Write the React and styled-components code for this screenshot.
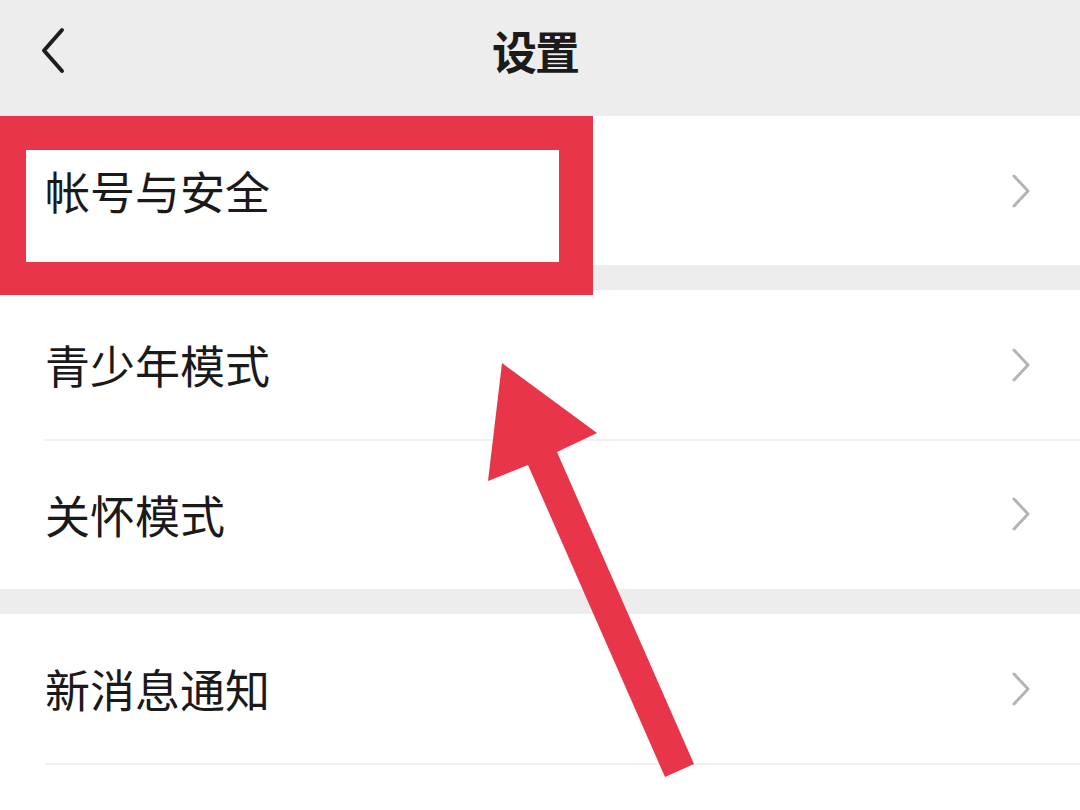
import React from "react";
import styled, { createGlobalStyle } from "styled-components";

const GlobalStyle = createGlobalStyle`
  html, body { margin: 0; padding: 0; background: #ededed; }
  body { font-family: "Noto Sans CJK SC", "Noto Sans", sans-serif; }
  * { box-sizing: border-box; }
`;

const Page = styled.div`
  position: relative;
  width: 1080px;
  height: 810px;
  overflow: hidden;
  background: #ededed;
  display: flex;
  flex-direction: column;
`;

const Header = styled.header`
  height: 116px;
  flex: none;
  display: grid;
  grid-template-columns: 120px 1fr 130px;
  align-items: start;
  padding-top: 24px;
`;

const BackButton = styled.div`
  padding-left: 40px;
  padding-top: 3px;
  display: flex;
`;

const Title = styled.h1`
  margin: 0;
  text-align: center;
  font-size: 45px;
  line-height: 54px;
  font-weight: 700;
  color: #1b1b1b;
  letter-spacing: -2px;
`;

const Groups = styled.div`
  display: flex;
  flex-direction: column;
  gap: 25px;
`;

const Group = styled.section`
  background: #ffffff;
  display: flex;
  flex-direction: column;
`;

const Row = styled.div`
  position: relative;
  height: ${(p) => (p.$first ? 149 : 150)}px;
  display: flex;
  align-items: center;
  justify-content: space-between;
  padding: 0 48px 0 45px;
  ${(p) =>
    p.$first
      ? ""
      : `
    &::before {
      content: "";
      position: absolute;
      left: 45px;
      right: 0;
      top: 0;
      height: 2px;
      background: #f0f0f0;
    }
  `}
`;

const Label = styled.span`
  font-size: 45px;
  line-height: 1;
  color: #1a1a1a;
  font-weight: 400;
  margin-top: 0px;
`;

const Frame = styled.div`
  position: absolute;
  left: 0;
  top: 116px;
  width: 593px;
  height: 179px;
  border-style: solid;
  border-color: #e8354a;
  border-width: 34px 34px 33px 26px;
  pointer-events: none;
`;

const ArrowSvg = styled.svg`
  position: absolute;
  left: 0;
  top: 0;
  pointer-events: none;
`;

const Chevron = () => (
  <svg width="22" height="36" viewBox="0 0 22 36">
    <path d="M4 3 L18 18 L4 33" fill="none" stroke="#b4b4b4" strokeWidth="3" strokeLinecap="round" strokeLinejoin="round" />
  </svg>
);

const BackIcon = () => (
  <svg width="26" height="48" viewBox="0 0 26 48">
    <path d="M22 3 L4 23.5 L22 44" fill="none" stroke="#1e1e1e" strokeWidth="4" strokeLinecap="round" strokeLinejoin="round" />
  </svg>
);

const groups = [
  ["帐号与安全"],
  ["青少年模式", "关怀模式"],
  ["新消息通知", null],
];

export default function App() {
  return (
    <>
      <GlobalStyle />
      <Page>
        <Header>
          <BackButton>
            <BackIcon />
          </BackButton>
          <Title>设置</Title>
          <div />
        </Header>
        <Groups>
          {groups.map((items, gi) => (
            <Group key={gi}>
              {items.map((label, i) => (
                <Row key={i} $first={i === 0}>
                  {label && (
                    <>
                      <Label>{label}</Label>
                      <Chevron />
                    </>
                  )}
                </Row>
              ))}
            </Group>
          ))}
        </Groups>
        <Frame />
        <ArrowSvg width="1080" height="810" viewBox="0 0 1080 810">
          <polygon
            points="502,363 597,433 557,452 694,764 665,777 528,465 488,481"
            fill="#e8354a"
          />
        </ArrowSvg>
      </Page>
    </>
  );
}
